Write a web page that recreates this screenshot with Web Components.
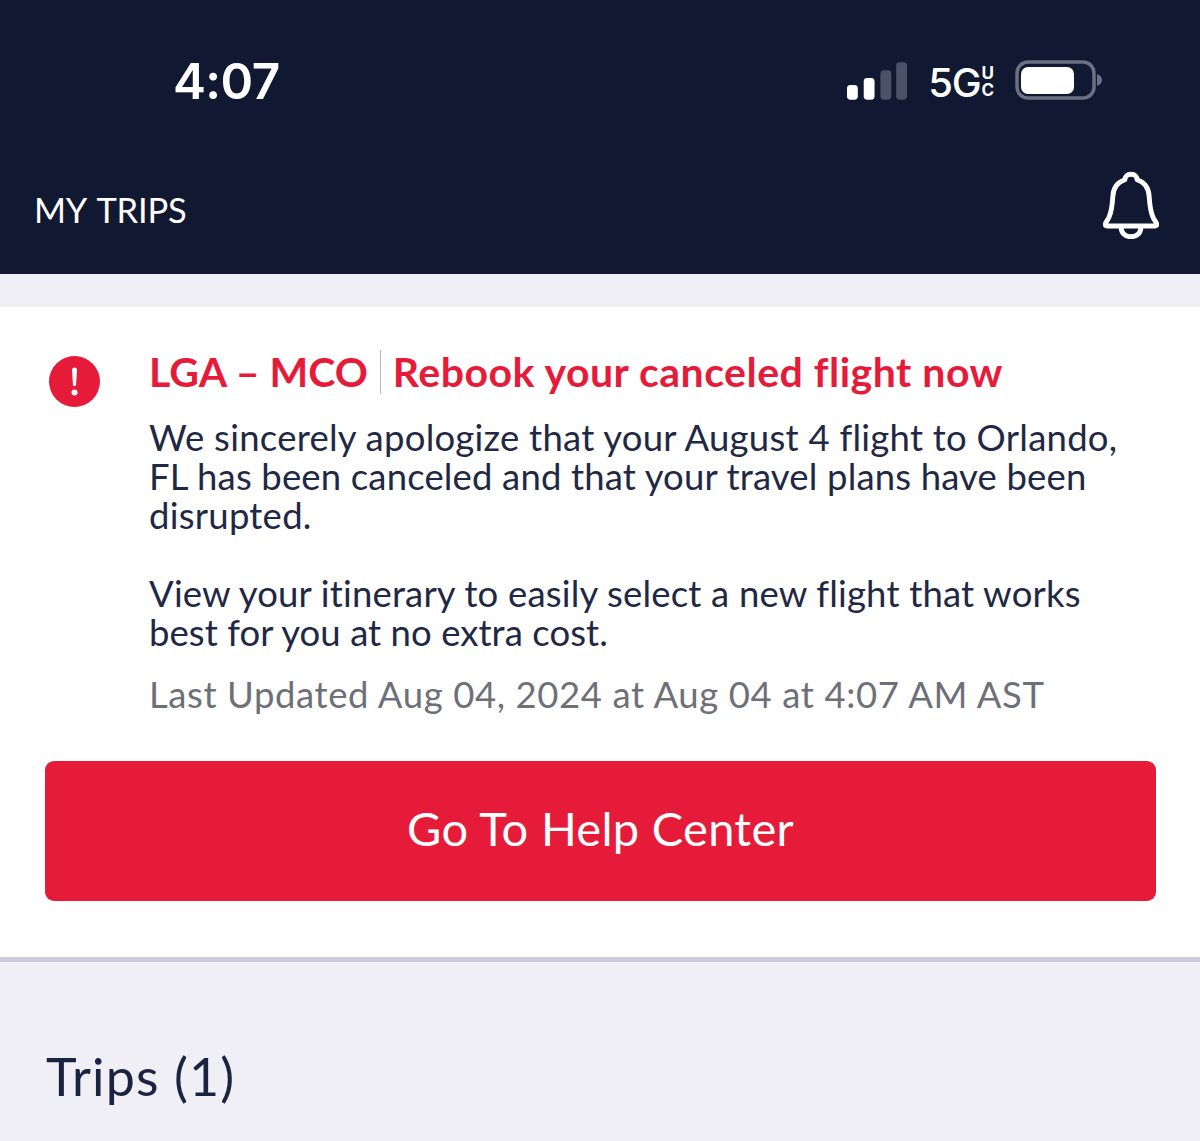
<!DOCTYPE html>
<html>
<head>
<meta charset="utf-8">
<title>My Trips</title>
<style>
    html, body { margin: 0; padding: 0; background: #efeff5; }
    body { font-family: "Lato", "Open Sans", sans-serif; width: 1200px; height: 1141px; overflow: hidden; }
</style>
</head>
<body>
<trips-screen>
    <app-header></app-header>
    <alert-card route="LGA – MCO" title="Rebook your canceled flight now" action="Go To Help Center" updated="Last Updated Aug 04, 2024 at Aug 04 at 4:07 AM AST">
        <span>We sincerely apologize that your August 4 flight to Orlando,</span>
        <span style="letter-spacing: 0.15px">FL has been canceled and that your travel plans have been</span>
        <span>disrupted.</span>
        <span>&nbsp;</span>
        <span style="letter-spacing: 0.17px">View your itinerary to easily select a new flight that works</span>
        <span style="letter-spacing: 0.05px">best for you at no extra cost.</span>
    </alert-card>
    <section-title>Trips (1)</section-title>
</trips-screen>
<script>
class TripsScreen extends HTMLElement {
    constructor() {
        super();
        this.shadowDOM = this.attachShadow({mode: "open"});
        this.shadowDOM.innerHTML = `
            <style>
                :host { display: flex; flex-direction: column; width: 1200px; height: 1141px; background: #efeff5; }
            </style>
            <slot></slot>`;
    }
}

class AppHeader extends HTMLElement {
    constructor() {
        super();
        this.shadowDOM = this.attachShadow({mode: "open"});
        this.shadowDOM.innerHTML = `
            <style>
                :host { display: block; height: 274px; background: #101832; color: #fff; flex: none; }
                .status { height: 160px; display: flex; align-items: center; box-sizing: border-box; padding: 0 98px 0 173px; }
                .time { font: 600 49.500px/1 "Inter", "Liberation Sans", sans-serif; letter-spacing: -0.6px; flex: 1; margin-top: 3px; }
                .status svg { display: block; }
                .bars { margin-top: 2px; }
                .net { font: 500 40px/1 "Inter", "Liberation Sans", sans-serif; letter-spacing: -1.2px; margin: 5px 0 0 20px; }
                .uc { display: flex; flex-direction: column; font: 700 17px/17px "Inter", "Liberation Sans", sans-serif; margin: 4px 21px 0 1px; align-items: center; }
                .title { height: 114px; display: flex; align-items: flex-start; justify-content: space-between; padding: 0 41px 0 34px; }
                .title span { font: 400 34.500px/1 "Lato", sans-serif; margin-top: 33px; letter-spacing: -0.2px; word-spacing: 3px; }
                .title svg { margin-top: 11px; }
            </style>
            <div class="status">
                <div class="time">4:07</div>
                <svg class="bars" width="61" height="38" viewBox="0 0 62 38">
                    <rect x="0" y="23" width="11" height="15" rx="3.500" fill="#fff"/>
                    <rect x="17" y="16" width="11" height="22" rx="3.500" fill="#fff"/>
                    <rect x="34" y="8" width="11" height="30" rx="3.500" fill="#4b5267"/>
                    <rect x="50" y="0" width="11" height="38" rx="3.500" fill="#4b5267"/>
                </svg>
                <div class="net">5G</div>
                <div class="uc"><span>U</span><span>C</span></div>
                <svg width="87" height="40" viewBox="0 0 87 40">
                    <rect x="2" y="2" width="77" height="36" rx="11" fill="none" stroke="#6b7083" stroke-width="3.500"/>
                    <rect x="6" y="7" width="53" height="27" rx="7" fill="#fff"/>
                    <path d="M82 14c3 1 5 3 5 6s-2 5-5 6z" fill="#6b7083"/>
                </svg>
            </div>
            <div class="title">
                <span>MY TRIPS</span>
                <svg width="56" height="68" viewBox="0 0 60 72" fill="none" stroke="#fff" stroke-width="5.200" stroke-linejoin="round" stroke-linecap="round">
                    <path d="M30 3c-4 0-6.500 2.500-6.500 6-8 2.500-12.500 9-13 18-.5 9-1.500 16-4 22-1 2.500-3 4.500-4 7-.5 1.500 0 2.500 2 2.500h51c2 0 2.500-1 2-2.500-1-2.500-3-4.500-4-7-2.500-6-3.500-13-4-22-.5-9-5-15.500-13-18C36.500 5.500 34 3 30 3z"/>
                    <path d="M19.500 59c-.5 7 4 11 10.500 11s11-4 10.500-11"/>
                </svg>
            </div>`;
    }
}

class AlertCard extends HTMLElement {
    constructor() {
        super();
        this.shadowDOM = this.attachShadow({mode: "open"});
    }

    connectedCallback() {
        this.shadowDOM.innerHTML = `
            <style>
                :host { display: block; margin-top: 33px; background: #fff; border-bottom: 5px solid #cccbde; height: 650px; flex: none; }
                .top { display: grid; grid-template-columns: 100px 1fr; padding: 42px 0 0 49px; }
                .icon { width: 51px; height: 51px; margin-top: 7px; }
                h2 { margin: 0; display: flex; align-items: center; height: 46px; font: 700 41px/46px "Lato", sans-serif; color: #e61b3a; white-space: nowrap; }
                .route { padding-right: 12px; border-right: 1px solid #b9bac2; height: 44px; line-height: 44px; letter-spacing: 0; }
                .head { padding-left: 12px; letter-spacing: 0.5px; }
                .body { margin-top: 23px; font: 400 36.500px/39px "Lato", sans-serif; letter-spacing: 0.25px; color: #1f2844; white-space: nowrap; }
                ::slotted(span) { display: block; }
                .updated { margin-top: 22px; font: 400 36.500px/41px "Lato", sans-serif; letter-spacing: 0.6px; color: #6d7078; white-space: nowrap; }
                .btn { display: flex; align-items: center; justify-content: center; box-sizing: border-box; height: 140px; padding-bottom: 5px; margin: 46px 44px 0 45px; border-radius: 9px; background: #e61b3a; color: #fff; font: 400 47px/1 "Lato", sans-serif; letter-spacing: 0.3px; }
            </style>
            <div class="top">
                <svg class="icon" viewBox="0 0 51 51">
                    <circle cx="25.500" cy="25.500" r="25.500" fill="#e61b3a"/>
                    <path d="M25.500 11.500c1.500 0 2.600 1 2.500 2.500l-.9 14.500c-.1 1-.7 1.500-1.600 1.500s-1.500-.5-1.600-1.500L23 14c-.1-1.500 1-2.500 2.500-2.500z" fill="#fff"/>
                    <circle cx="25.500" cy="36.500" r="3" fill="#fff"/>
                </svg>
                <div>
                    <h2><span class="route">${this.getAttribute("route")}</span><span class="head">${this.getAttribute("title")}</span></h2>
                    <div class="body"><slot></slot></div>
                    <div class="updated">${this.getAttribute("updated")}</div>
                </div>
            </div>
            <div class="btn">${this.getAttribute("action")}</div>`;
    }
}

class SectionTitle extends HTMLElement {
    constructor() {
        super();
        this.shadowDOM = this.attachShadow({mode: "open"});
        this.shadowDOM.innerHTML = `
            <style>
                :host { display: block; padding: 84px 0 0 46px; font: 400 52px/60px "Lato", sans-serif; letter-spacing: 1.1px; color: #1a2340; }
            </style>
            <slot></slot>`;
    }
}

customElements.define("trips-screen", TripsScreen);
customElements.define("app-header", AppHeader);
customElements.define("alert-card", AlertCard);
customElements.define("section-title", SectionTitle);
</script>
</body>
</html>
